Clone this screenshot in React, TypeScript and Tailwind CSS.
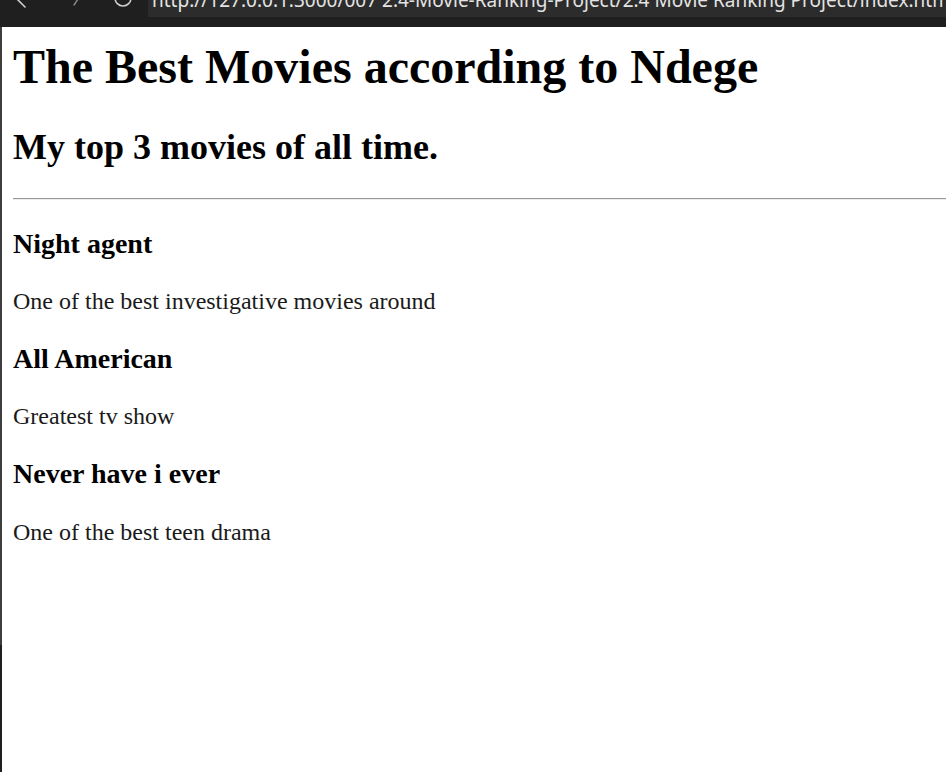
import React from "react";

export default function App() {
  return (
    <div className="w-[946px] h-[772px] overflow-hidden bg-white flex flex-col">
      {/* clipped browser chrome */}
      <div className="h-[27px] shrink-0 bg-[#1f1f1f] flex overflow-hidden">
        <svg width="148" height="27" viewBox="0 0 148 27" className="shrink-0">
          <path d="M14 -4 L25 7" stroke="#cfcfcf" strokeWidth="1.6" fill="none" strokeLinecap="round" />
          <path d="M80 -4 L74 5" stroke="#8a8a8a" strokeWidth="1.4" fill="none" strokeLinecap="round" />
          <circle cx="123" cy="-2" r="8" stroke="#cfcfcf" strokeWidth="1.6" fill="none" />
        </svg>
        <div className="h-[17px] flex-1 bg-[#2c2c2c] overflow-hidden pl-[4px]">
          <div
            className="-mt-[12px] whitespace-nowrap text-[19px] leading-[24px] text-[#e3e3e3]"
            style={{ fontFamily: '"Noto Sans", "Open Sans", sans-serif' }}
          >
            http://127.0.0.1:3000/007 2.4-Movie-Ranking-Project/2.4 Movie Ranking Project/index.html
          </div>
        </div>
      </div>
      {/* page */}
      <div className="flex-1 flex">
        <div className="w-[2px] shrink-0 flex flex-col">
          <div className="h-[618px] bg-[#3d3d3d]" />
          <div className="flex-1 bg-[#1f1f1f]" />
        </div>
        <div
          className="flex-1 pl-[11px] text-black whitespace-nowrap"
          style={{ fontFamily: '"Liberation Serif", "Times New Roman", serif' }}
        >
          <h1 className="mt-[12px] text-[48px] font-bold leading-[normal]">
            The Best Movies according to Ndege
          </h1>
          <h2 className="mt-[32px] text-[36px] font-bold leading-[normal]">
            My top 3 movies of all time.
          </h2>
          <hr className="mt-[30px] h-0 border-t border-b border-t-[#999999] border-b-[#ececec]" />
          <h3 className="mt-[28px] text-[28px] font-bold leading-[normal]">Night agent</h3>
          <p className="mt-[28px] text-[24px] leading-[normal] text-[#1a1a1a]">
            One of the best investigative movies around
          </p>
          <h3 className="mt-[28px] text-[28px] font-bold leading-[normal]">All American</h3>
          <p className="mt-[28px] text-[24px] leading-[normal] text-[#1a1a1a]">Greatest tv show</p>
          <h3 className="mt-[28px] text-[28px] font-bold leading-[normal]">Never have i ever</h3>
          <p className="mt-[29px] text-[24px] leading-[normal] text-[#1a1a1a]">
            One of the best teen drama
          </p>
        </div>
      </div>
    </div>
  );
}
